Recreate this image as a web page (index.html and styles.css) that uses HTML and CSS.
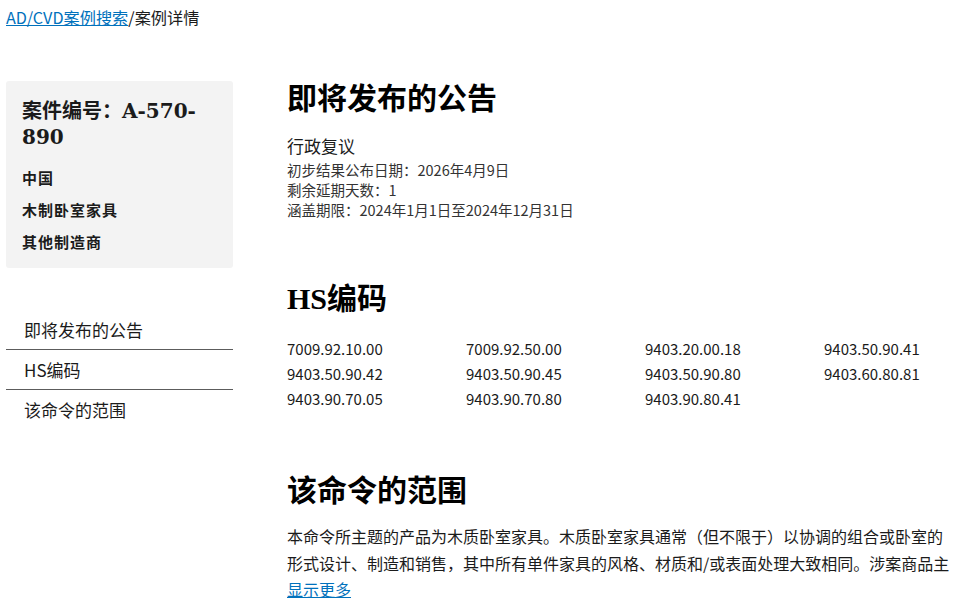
FILE: index.html
```html
<!DOCTYPE html>
<html lang="zh-CN">
<head>
  <meta charset="UTF-8" />
  <title>案例详情</title>
  <link rel="stylesheet" href="styles.css">
</head>
<body>

  <div class="breadcrumb">
    <a href="#">AD/CVD案例搜索</a>/案例详情
  </div>

  <div class="layout">
    <!-- Sidebar -->
    <aside class="sidebar">
      <div class="case-card">
        <h1>案件编号：A-570-890</h1>
        <p>中国</p>
        <p>木制卧室家具</p>
        <p>其他制造商</p>
      </div>

      <ul class="side-nav">
        <li><a href="#notices">即将发布的公告</a></li>
        <li><a href="#hs">HS编码</a></li>
        <li><a href="#scope">该命令的范围</a></li>
      </ul>
    </aside>

    <!-- Main content -->
    <main class="content">
      <section id="notices" class="block">
        <h2>即将发布的公告</h2>
        <div class="notice-type">行政复议</div>
        <div class="notice-line">初步结果公布日期：2026年4月9日</div>
        <div class="notice-line">剩余延期天数：1</div>
        <div class="notice-line">涵盖期限：2024年1月1日至2024年12月31日</div>
      </section>

      <section id="hs" class="block">
        <h2>HS编码</h2>
        <div class="hs-grid">
          <span>7009.92.10.00</span>
          <span>7009.92.50.00</span>
          <span>9403.20.00.18</span>
          <span>9403.50.90.41</span>
          <span>9403.50.90.42</span>
          <span>9403.50.90.45</span>
          <span>9403.50.90.80</span>
          <span>9403.60.80.81</span>
          <span>9403.90.70.05</span>
          <span>9403.90.70.80</span>
          <span>9403.90.80.41</span>
        </div>
      </section>

      <section id="scope" class="block">
        <h2>该命令的范围</h2>
        <p class="scope-text">本命令所主题的产品为木质卧室家具。木质卧室家具通常（但不限于）以协调的组合或卧室的形式设计、制造和销售，其中所有单件家具的风格、材质和/或表面处理大致相同。涉案商品主</p>
        <a href="#" class="more">显示更多</a>
      </section>
    </main>
  </div>

</body>
</html>
```

FILE: styles.css
```css
body {
  margin: 0;
  padding: 0 0 0 6px;
  font-family: "Noto Sans CJK SC", "Noto Sans", sans-serif;
  color: #1b1b1b;
  background: #fff;
}

a {
  color: #0071bc;
}

.breadcrumb {
  font-size: 16.2px;
  line-height: 20px;
  padding-top: 7px;
}

.layout {
  display: flex;
  gap: 54px;
  margin-top: 54px;
}

.sidebar {
  width: 227px;
  flex-shrink: 0;
}

.case-card {
  background: #f3f3f3;
  border-radius: 3px;
  padding: 17px 16px 17px 16px;
}
.case-card h1 {
  font-family: "DejaVu Serif", "Liberation Serif", "Noto Sans CJK SC", serif;
  font-size: 20px;
  line-height: 26px;
  font-weight: bold;
  margin: 0 0 19px 0;
}
.case-card p {
  font-size: 15px;
  letter-spacing: 1px;
  font-weight: bold;
  line-height: 18px;
  margin: 0 0 14px 0;
}
.case-card p:last-child {
  margin-bottom: 0;
}

.side-nav {
  list-style: none;
  margin: 42px 0 0 0;
  padding: 0;
}
.side-nav li {
  border-bottom: 1px solid #5c5c5c;
}
.side-nav li:last-child {
  border-bottom: none;
}
.side-nav a {
  display: block;
  padding: 0 18px;
  line-height: 39px;
  font-size: 17px;
  color: #1b1b1b;
  text-decoration: none;
}

.content {
  flex: 1;
  max-width: 666px;
}

.block {
  margin-bottom: 61px;
}
.block:last-child {
  margin-bottom: 0;
}
.block h2 {
  font-family: "Liberation Serif", "Noto Sans CJK SC", serif;
  font-size: 30px;
  line-height: 36px;
  font-weight: bold;
  margin: 0 0 18px 0;
  color: #000;
}
#hs {
  margin-bottom: 64px;
}
#hs h2 {
  margin-bottom: 22px;
}
#scope h2 {
  margin-bottom: 14px;
}

.notice-type {
  font-size: 17px;
  line-height: 22px;
  margin-bottom: 3px;
}
.notice-line {
  font-size: 14.5px;
  line-height: 20px;
  color: #333;
}

.hs-grid {
  display: grid;
  grid-template-columns: 179px 179px 179px auto;
  row-gap: 5px;
  font-size: 15px;
  line-height: 20px;
}

.scope-text {
  font-size: 16px;
  line-height: 27px;
  margin: 0;
}
.more {
  display: inline-block;
  font-size: 16px;
  line-height: 16px;
}
```
